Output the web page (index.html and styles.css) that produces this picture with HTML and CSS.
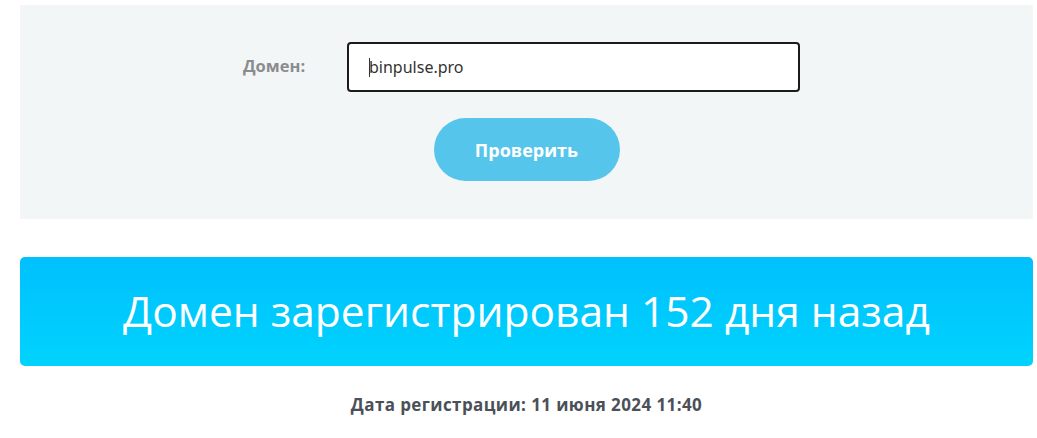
FILE: index.html
```html
<!doctype html>
<html lang="ru">
    <head>
        <meta charset="utf-8" />
        <title>Проверка возраста домена</title>
        <link rel="stylesheet" href="styles.css">
    </head>
 <body>
    <div class="page">
        <form class="check-form">
            <div class="row">
                <label class="label" for="domain">Домен:</label>
                <div class="field"><span class="caret"></span><input id="domain" class="input" type="text" value="binpulse.pro"></div>
            </div>
            <button class="btn" type="button">Проверить</button>
        </form>
        <div class="result">Домен зарегистрирован 152 дня назад</div>
        <p class="date">Дата регистрации: 11 июня 2024 11:40</p>
    </div>
 </body>
</html>
```

FILE: styles.css
```css
*{
    margin:0;
    padding:0;
    box-sizing:border-box;
}
body{
    font-family:"Open Sans","Liberation Sans",sans-serif;
    background:#fff;
}
.page{
    padding:5px 4px 0 20px;
}
.check-form{
    background:#f3f6f7;
    height:214px;
    padding-top:37px;
    display:flex;
    flex-direction:column;
    align-items:center;
}
.row{
    display:flex;
    align-items:center;
    margin-left:-10px;
}
.label{
    width:104px;
    font-size:16.5px;
    font-weight:700;
    color:#8a8c8e;
    padding-bottom:3px;
}
.field{
    position:relative;
}
.input{
    width:453px;
    height:50px;
    border:2px solid #1b1b1b;
    border-radius:4px;
    padding:0 20px;
    font-family:"Noto Sans",sans-serif;
    font-size:16px;
    color:#333;
    background:#fff;
    outline:none;
}
.caret{
    position:absolute;
    left:22px;
    top:16px;
    width:1px;
    height:19px;
    background:#333;
}
.btn{
    margin-top:26px;
    width:186px;
    height:63px;
    border:none;
    border-radius:32px;
    background:#56c5ec;
    color:#fff;
    font-family:"Open Sans",sans-serif;
    font-size:18px;
    font-weight:700;
}
.result{
    margin-top:38px;
    height:109px;
    border-radius:5px;
    background:linear-gradient(#00c0fd,#00d3fd);
    color:#fff;
    font-size:42.5px;
    font-weight:400;
    display:flex;
    align-items:center;
    justify-content:center;
    padding-bottom:2px;
}
.date{
    margin-top:27px;
    text-align:center;
    font-size:17px;
    font-weight:700;
    letter-spacing:0.4px;
    color:#4b5058;
}
```
